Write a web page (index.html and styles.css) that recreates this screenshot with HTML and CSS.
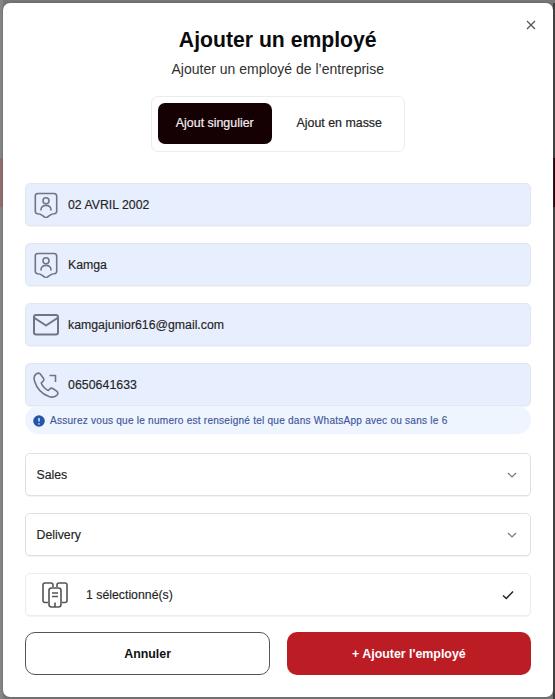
FILE: index.html
```html
<!DOCTYPE html>
<html lang="fr">
<head>
<meta charset="utf-8">
<title>Ajouter un employé</title>
<link rel="stylesheet" href="styles.css">
</head>
<body>
<main class="modal">
  <button class="close" aria-label="Fermer"><svg width="10" height="10" viewBox="0 0 10 10"><path d="M1 1l8 8M9 1L1 9"/></svg></button>
  <h1><span>Ajouter un employé</span></h1>
  <p class="subtitle"><span>Ajouter un employé de l’entreprise</span></p>
  <div class="tabs">
    <button class="tab active"><span>Ajout singulier</span></button>
    <button class="tab"><span>Ajout en masse</span></button>
  </div>
  <form class="form">
    <div class="field filled">
      <svg class="icon" viewBox="0 0 26 26"><path d="M5 1.500h16q2.700 0 2.700 2.700v15q0 2.300-2.500 2.500-2.400 0-4 1.500L14.500 25q-1.500 1.200-3 0l-2.700-1.800q-1.600-1.500-4-1.500-2.500-.2-2.500-2.500v-15Q2.300 1.500 5 1.500z"/><circle cx="13" cy="8.800" r="3"/><path d="M8 18.500v-.8c0-5.800 10-5.800 10 0v.8"/></svg>
      <span class="value">02 AVRIL 2002</span>
    </div>
    <div class="field filled">
      <svg class="icon" viewBox="0 0 26 26"><path d="M5 1.500h16q2.700 0 2.700 2.700v15q0 2.300-2.500 2.500-2.400 0-4 1.500L14.500 25q-1.500 1.200-3 0l-2.700-1.800q-1.600-1.500-4-1.500-2.500-.2-2.500-2.500v-15Q2.300 1.500 5 1.500z"/><circle cx="13" cy="8.800" r="3"/><path d="M8 18.500v-.8c0-5.800 10-5.800 10 0v.8"/></svg>
      <span class="value">Kamga</span>
    </div>
    <div class="field filled">
      <svg class="icon mail" viewBox="0 0 26 26"><rect x="1" y="3" width="24" height="19.500" rx="2"/><path d="M1.500 6L13 13.500 24.500 6"/></svg>
      <span class="value">kamgajunior616@gmail.com</span>
    </div>
    <div class="phone">
      <div class="field filled">
        <svg class="icon" viewBox="0 0 26 26"><path d="M3.500 1.800C1 3.200.7 6.500 1.700 9.500c2 6.500 7.300 12.500 14.200 15 3.500 1.200 6.500.8 8.400-1.700 1-1.500.6-2.700-.6-3.700l-4-2.600c-1.200-.6-2.300-.3-3.200.7l-1.200 1.200c-2.700-.8-6-4.500-7.100-7.400l1.700-1.600c1-.9 1.200-2 .5-3.200L7.700 2.500C6.700 1 5.200.8 3.500 1.800z"/><path d="M16.500 3.500h6V10"/></svg>
        <span class="value phone-number">0650641633</span>
      </div>
      <div class="notice"><svg width="12" height="12" viewBox="0 0 12 12"><circle cx="6" cy="6" r="5.800"/><path d="M6 3v3.500M6 8.200v1.200"/></svg><span>Assurez vous que le numero est renseigné tel que dans WhatsApp avec ou sans le 6</span></div>
    </div>
    <div class="field select"><span class="value">Sales</span><svg class="arrow" viewBox="0 0 10 10"><path d="M1 3l4 4 4-4"/></svg></div>
    <div class="field select"><span class="value">Delivery</span><svg class="arrow" viewBox="0 0 10 10"><path d="M1 3l4 4 4-4"/></svg></div>
    <div class="field multi">
      <svg class="icon" viewBox="0 0 26 26"><path d="M6 20.500H3q-2 0-2-2V3q0-2 2-2h6q2 0 2 2v2M20 20.500h3q2 0 2-2V3q0-2-2-2h-6q-2 0-2 2v2"/><rect x="7" y="6" width="12" height="19" rx="2.500"/><path d="M10 11h6M10 14.500h6M13 20.500V25"/></svg>
      <span class="value">1 sélectionné(s)</span>
      <svg class="check" viewBox="0 0 12 12"><path d="M1 6.500L4.300 9.500 11 2.500"/></svg>
    </div>
    <div class="actions">
      <button type="button" class="cancel"><span>Annuler</span></button>
      <button type="button" class="submit"><span>+ Ajouter l'employé</span></button>
    </div>
  </form>
</main>
</body>
</html>
```
FILE: styles.css
```css
* { box-sizing: border-box; }
body {
  margin: 0;
  height: 699px;
  padding: 3px 2px 2px 3px;
  overflow: hidden;
  font-family: "Liberation Sans", Arial, sans-serif;
  color: #242424;
  background:
    linear-gradient(#916d70, #916d70) 0 158px / 3px 49px no-repeat,
    linear-gradient(#260207, #260207) 100% 158px / 2px 49px no-repeat,
    linear-gradient(#858585, #858585) 0 0 / 3px 100% no-repeat,
    linear-gradient(#3b3d3e, #3b3d3e) 100% 3px / 2px 100% no-repeat,
    #777;
}
button { font: inherit; color: inherit; margin: 0; padding: 0; border: 0; background: none; }
svg { display: block; flex: none; fill: none; stroke: currentColor; }
.modal {
  position: relative;
  height: 694px;
  padding: 24px 22.500px 0 22px;
  border-radius: 7px;
  background: #fff;
  box-shadow: 0 0 2px #555;
}
.close { position: absolute; top: 17px; right: 17px; color: #555; }
.close svg { stroke-width: 1.3; }
h1 { margin: 0; height: 25px; font-size: 21.200px; line-height: 25px; text-align: center; color: #0b0b0d; }
.subtitle { margin: 7px 0 0; height: 20px; font-size: 14px; line-height: 21px; text-align: center; color: #303030; }
.tabs {
  display: flex;
  width: 254px;
  height: 56px;
  margin: 17px auto 0;
  padding: 6px;
  border: 1px solid #ececee;
  border-radius: 7px;
}
.tab { flex: 1; height: 41px; border-radius: 7px; font-size: 12.400px; -webkit-text-stroke: .2px; padding: 0 0 1px 9px; }
.tab.active { flex: 0 0 114px; padding: 0 0 1px; background: #150003; color: #f2eeee; }
.form { display: grid; gap: 17px; margin-top: 31px; }
.field {
  display: flex;
  align-items: center;
  height: 43px;
  padding: 0 13px 0 7px;
  border: 1px solid #dfe0e2;
  border-radius: 5px;
  box-shadow: 0 1px 1px #0000000d;
  font-size: 12.300px;
}
.filled { background: #e7eefe; border-color: #e2e7ef; }
.icon { width: 26px; height: 26px; color: #6f7582; stroke-width: 1.600; stroke-linejoin: round; }
.mail { stroke-width: 2; }
.filled .value { margin-left: 9px; }
.value { -webkit-text-stroke: .15px; }
.phone-number { letter-spacing: .06px; }
.notice {
  display: flex;
  align-items: center;
  height: 28px;
  margin-bottom: 2px;
  padding: 1px 0 0 8px;
  gap: 5px;
  border-radius: 14px;
  background: #eff5fe;
  color: #3e559c;
  font-size: 10.100px;
  letter-spacing: .22px;
  white-space: nowrap;
  -webkit-text-stroke: .15px;
}
.notice svg { color: #fff; stroke-width: 1.300; }
.notice circle { fill: #2455ad; stroke: none; }
.select { justify-content: space-between; padding-left: 10.500px; }
.arrow { width: 10px; height: 10px; color: #777; stroke-width: 1.200; }
.multi { padding-left: 15.500px; padding-right: 16px; border-color: #ececee; }
.multi .icon { color: #555; }
.multi .value { margin-left: 18.500px; }
.check { width: 12px; height: 12px; margin-left: auto; stroke-width: 1.500; }
.actions { display: flex; gap: 17px; margin-top: -1px; }
.actions button { flex: 1; height: 43px; border-radius: 10px; font-size: 12.400px; font-weight: bold; }
.cancel { border: 1.500px solid #555; color: #111; }
.actions .submit { background: #bc1c24; color: #fff; }
```
